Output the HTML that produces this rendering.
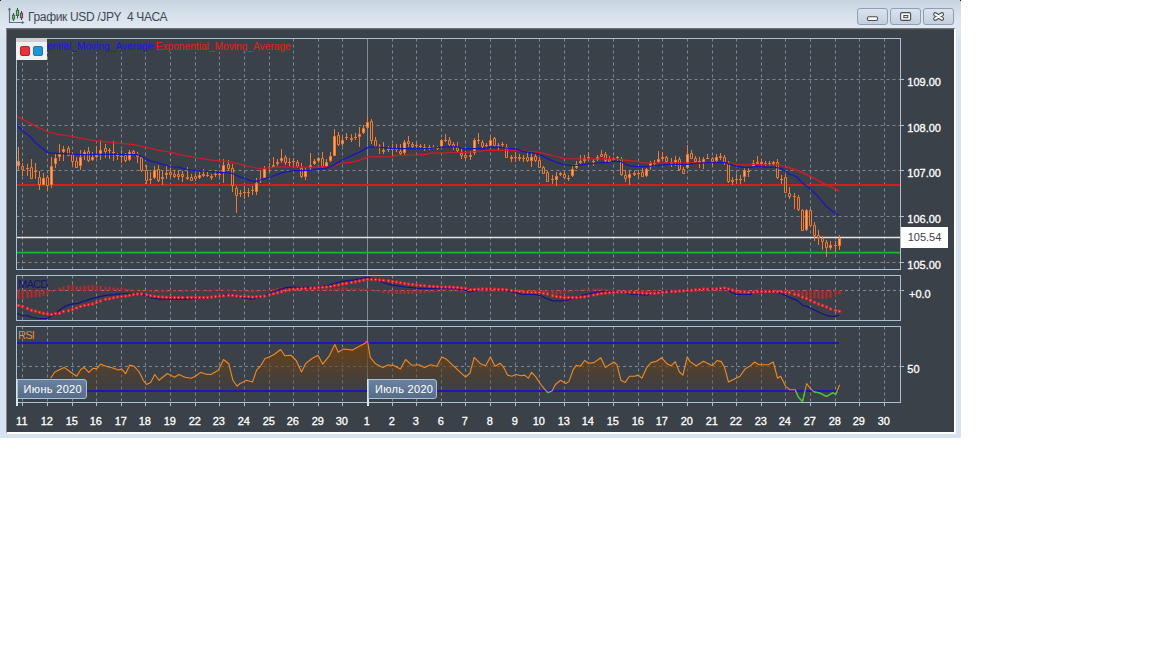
<!DOCTYPE html>
<html lang="ru"><head><meta charset="utf-8"><title>График USD /JPY 4 ЧАСА</title>
<style>
html,body{margin:0;padding:0;background:#fff;}
body{width:1152px;height:648px;position:relative;overflow:hidden;font-family:"Liberation Sans",sans-serif;}
#win{position:absolute;left:0;top:0;width:961px;height:438px;background:linear-gradient(#c7d3df 0px,#d8e1eb 14px,#e0e8f1 28px,#d6e3f0 40px,#d6e3f0 100%);overflow:hidden;}
#cl{position:absolute;left:6px;top:28px;width:950px;height:406px;background:#3b4149;border-top:1px solid #6c6f73;border-left:1px solid #85888c;border-right:2px solid #fff;border-bottom:2px solid #fff;box-sizing:border-box;box-shadow:inset 0 1px 0 #4a4f56;}
#title{position:absolute;left:28px;top:9.6px;font-size:12px;letter-spacing:-0.34px;line-height:15px;color:#3e4852;white-space:pre;}
.btn svg{position:absolute;left:-1px;top:-1px;}
.btn{position:absolute;top:8px;width:30.5px;height:16.5px;box-sizing:border-box;border:1px solid #8e9fb4;border-radius:3px;background:linear-gradient(#dbe3ee,#c3cfde);}
.xl{position:absolute;top:415.2px;-webkit-text-stroke:0.3px #fff;width:30px;text-align:center;font-size:11px;line-height:13px;color:#fff;}
.pl{position:absolute;left:907.3px;-webkit-text-stroke:0.3px #fff;font-size:11px;line-height:13px;color:#fff;}
#leg{position:absolute;left:16px;top:38px;width:31px;height:22px;background:linear-gradient(#cfcfcf 0,#cfcfcf 4px,#f1f1f1 4px);}
#leg i{position:absolute;top:8px;width:10px;height:10px;border-radius:2px;box-sizing:border-box;}
.ema{position:absolute;top:39px;height:13px;padding-top:1px;box-sizing:border-box;background:#3b4149;font-size:10.2px;line-height:13px;white-space:pre;}
.mon{position:absolute;top:379px;height:20px;box-sizing:border-box;border:1px solid #a9bfd6;border-radius:0 3px 3px 0;background:linear-gradient(#6a829f,#566d8a);color:#fff;font-size:11px;line-height:18px;padding:0 0 0 7px;}
.ind{position:absolute;font-size:11px;line-height:13px;}
#cur{position:absolute;left:901px;top:227px;width:47px;height:21px;background:#fff;color:#3b4149;font-size:11px;line-height:21px;text-align:center;}
</style></head><body>
<div id="win">
<div id="cl"></div><div style="position:absolute;left:0;top:0;width:1px;height:1px;background:#222"></div><div style="position:absolute;left:960px;top:0;width:1px;height:1px;background:#222"></div>
<svg width="961" height="438" viewBox="0 0 961 438" style="position:absolute;left:0;top:0">
<defs><linearGradient id="rsig" gradientUnits="userSpaceOnUse" x1="0" y1="341" x2="0" y2="398"><stop offset="0" stop-color="#70400a" stop-opacity="0.95"/><stop offset="0.45" stop-color="#62401a" stop-opacity="0.62"/><stop offset="1" stop-color="#4a3a28" stop-opacity="0"/></linearGradient>
<clipPath id="cm"><rect x="17" y="39" width="883" height="230"/></clipPath>
</defs>
<line x1="22.5" y1="38.5" x2="22.5" y2="269.5" stroke="#7d8a96" stroke-width="1" stroke-dasharray="3 3"/>
<line x1="47.5" y1="38.5" x2="47.5" y2="269.5" stroke="#7d8a96" stroke-width="1" stroke-dasharray="3 3"/>
<line x1="72.5" y1="38.5" x2="72.5" y2="269.5" stroke="#7d8a96" stroke-width="1" stroke-dasharray="3 3"/>
<line x1="96.5" y1="38.5" x2="96.5" y2="269.5" stroke="#7d8a96" stroke-width="1" stroke-dasharray="3 3"/>
<line x1="121.5" y1="38.5" x2="121.5" y2="269.5" stroke="#7d8a96" stroke-width="1" stroke-dasharray="3 3"/>
<line x1="145.5" y1="38.5" x2="145.5" y2="269.5" stroke="#7d8a96" stroke-width="1" stroke-dasharray="3 3"/>
<line x1="170.5" y1="38.5" x2="170.5" y2="269.5" stroke="#7d8a96" stroke-width="1" stroke-dasharray="3 3"/>
<line x1="195.5" y1="38.5" x2="195.5" y2="269.5" stroke="#7d8a96" stroke-width="1" stroke-dasharray="3 3"/>
<line x1="219.5" y1="38.5" x2="219.5" y2="269.5" stroke="#7d8a96" stroke-width="1" stroke-dasharray="3 3"/>
<line x1="244.5" y1="38.5" x2="244.5" y2="269.5" stroke="#7d8a96" stroke-width="1" stroke-dasharray="3 3"/>
<line x1="269.5" y1="38.5" x2="269.5" y2="269.5" stroke="#7d8a96" stroke-width="1" stroke-dasharray="3 3"/>
<line x1="293.5" y1="38.5" x2="293.5" y2="269.5" stroke="#7d8a96" stroke-width="1" stroke-dasharray="3 3"/>
<line x1="318.5" y1="38.5" x2="318.5" y2="269.5" stroke="#7d8a96" stroke-width="1" stroke-dasharray="3 3"/>
<line x1="342.5" y1="38.5" x2="342.5" y2="269.5" stroke="#7d8a96" stroke-width="1" stroke-dasharray="3 3"/>
<line x1="392.5" y1="38.5" x2="392.5" y2="269.5" stroke="#7d8a96" stroke-width="1" stroke-dasharray="3 3"/>
<line x1="416.5" y1="38.5" x2="416.5" y2="269.5" stroke="#7d8a96" stroke-width="1" stroke-dasharray="3 3"/>
<line x1="441.5" y1="38.5" x2="441.5" y2="269.5" stroke="#7d8a96" stroke-width="1" stroke-dasharray="3 3"/>
<line x1="465.5" y1="38.5" x2="465.5" y2="269.5" stroke="#7d8a96" stroke-width="1" stroke-dasharray="3 3"/>
<line x1="490.5" y1="38.5" x2="490.5" y2="269.5" stroke="#7d8a96" stroke-width="1" stroke-dasharray="3 3"/>
<line x1="515.5" y1="38.5" x2="515.5" y2="269.5" stroke="#7d8a96" stroke-width="1" stroke-dasharray="3 3"/>
<line x1="539.5" y1="38.5" x2="539.5" y2="269.5" stroke="#7d8a96" stroke-width="1" stroke-dasharray="3 3"/>
<line x1="564.5" y1="38.5" x2="564.5" y2="269.5" stroke="#7d8a96" stroke-width="1" stroke-dasharray="3 3"/>
<line x1="588.5" y1="38.5" x2="588.5" y2="269.5" stroke="#7d8a96" stroke-width="1" stroke-dasharray="3 3"/>
<line x1="613.5" y1="38.5" x2="613.5" y2="269.5" stroke="#7d8a96" stroke-width="1" stroke-dasharray="3 3"/>
<line x1="638.5" y1="38.5" x2="638.5" y2="269.5" stroke="#7d8a96" stroke-width="1" stroke-dasharray="3 3"/>
<line x1="662.5" y1="38.5" x2="662.5" y2="269.5" stroke="#7d8a96" stroke-width="1" stroke-dasharray="3 3"/>
<line x1="687.5" y1="38.5" x2="687.5" y2="269.5" stroke="#7d8a96" stroke-width="1" stroke-dasharray="3 3"/>
<line x1="712.5" y1="38.5" x2="712.5" y2="269.5" stroke="#7d8a96" stroke-width="1" stroke-dasharray="3 3"/>
<line x1="736.5" y1="38.5" x2="736.5" y2="269.5" stroke="#7d8a96" stroke-width="1" stroke-dasharray="3 3"/>
<line x1="761.5" y1="38.5" x2="761.5" y2="269.5" stroke="#7d8a96" stroke-width="1" stroke-dasharray="3 3"/>
<line x1="785.5" y1="38.5" x2="785.5" y2="269.5" stroke="#7d8a96" stroke-width="1" stroke-dasharray="3 3"/>
<line x1="810.5" y1="38.5" x2="810.5" y2="269.5" stroke="#7d8a96" stroke-width="1" stroke-dasharray="3 3"/>
<line x1="835.5" y1="38.5" x2="835.5" y2="269.5" stroke="#7d8a96" stroke-width="1" stroke-dasharray="3 3"/>
<line x1="859.5" y1="38.5" x2="859.5" y2="269.5" stroke="#7d8a96" stroke-width="1" stroke-dasharray="3 3"/>
<line x1="884.5" y1="38.5" x2="884.5" y2="269.5" stroke="#7d8a96" stroke-width="1" stroke-dasharray="3 3"/>
<line x1="22.5" y1="275.5" x2="22.5" y2="320.5" stroke="#7d8a96" stroke-width="1" stroke-dasharray="3 3"/>
<line x1="47.5" y1="275.5" x2="47.5" y2="320.5" stroke="#7d8a96" stroke-width="1" stroke-dasharray="3 3"/>
<line x1="72.5" y1="275.5" x2="72.5" y2="320.5" stroke="#7d8a96" stroke-width="1" stroke-dasharray="3 3"/>
<line x1="96.5" y1="275.5" x2="96.5" y2="320.5" stroke="#7d8a96" stroke-width="1" stroke-dasharray="3 3"/>
<line x1="121.5" y1="275.5" x2="121.5" y2="320.5" stroke="#7d8a96" stroke-width="1" stroke-dasharray="3 3"/>
<line x1="145.5" y1="275.5" x2="145.5" y2="320.5" stroke="#7d8a96" stroke-width="1" stroke-dasharray="3 3"/>
<line x1="170.5" y1="275.5" x2="170.5" y2="320.5" stroke="#7d8a96" stroke-width="1" stroke-dasharray="3 3"/>
<line x1="195.5" y1="275.5" x2="195.5" y2="320.5" stroke="#7d8a96" stroke-width="1" stroke-dasharray="3 3"/>
<line x1="219.5" y1="275.5" x2="219.5" y2="320.5" stroke="#7d8a96" stroke-width="1" stroke-dasharray="3 3"/>
<line x1="244.5" y1="275.5" x2="244.5" y2="320.5" stroke="#7d8a96" stroke-width="1" stroke-dasharray="3 3"/>
<line x1="269.5" y1="275.5" x2="269.5" y2="320.5" stroke="#7d8a96" stroke-width="1" stroke-dasharray="3 3"/>
<line x1="293.5" y1="275.5" x2="293.5" y2="320.5" stroke="#7d8a96" stroke-width="1" stroke-dasharray="3 3"/>
<line x1="318.5" y1="275.5" x2="318.5" y2="320.5" stroke="#7d8a96" stroke-width="1" stroke-dasharray="3 3"/>
<line x1="342.5" y1="275.5" x2="342.5" y2="320.5" stroke="#7d8a96" stroke-width="1" stroke-dasharray="3 3"/>
<line x1="392.5" y1="275.5" x2="392.5" y2="320.5" stroke="#7d8a96" stroke-width="1" stroke-dasharray="3 3"/>
<line x1="416.5" y1="275.5" x2="416.5" y2="320.5" stroke="#7d8a96" stroke-width="1" stroke-dasharray="3 3"/>
<line x1="441.5" y1="275.5" x2="441.5" y2="320.5" stroke="#7d8a96" stroke-width="1" stroke-dasharray="3 3"/>
<line x1="465.5" y1="275.5" x2="465.5" y2="320.5" stroke="#7d8a96" stroke-width="1" stroke-dasharray="3 3"/>
<line x1="490.5" y1="275.5" x2="490.5" y2="320.5" stroke="#7d8a96" stroke-width="1" stroke-dasharray="3 3"/>
<line x1="515.5" y1="275.5" x2="515.5" y2="320.5" stroke="#7d8a96" stroke-width="1" stroke-dasharray="3 3"/>
<line x1="539.5" y1="275.5" x2="539.5" y2="320.5" stroke="#7d8a96" stroke-width="1" stroke-dasharray="3 3"/>
<line x1="564.5" y1="275.5" x2="564.5" y2="320.5" stroke="#7d8a96" stroke-width="1" stroke-dasharray="3 3"/>
<line x1="588.5" y1="275.5" x2="588.5" y2="320.5" stroke="#7d8a96" stroke-width="1" stroke-dasharray="3 3"/>
<line x1="613.5" y1="275.5" x2="613.5" y2="320.5" stroke="#7d8a96" stroke-width="1" stroke-dasharray="3 3"/>
<line x1="638.5" y1="275.5" x2="638.5" y2="320.5" stroke="#7d8a96" stroke-width="1" stroke-dasharray="3 3"/>
<line x1="662.5" y1="275.5" x2="662.5" y2="320.5" stroke="#7d8a96" stroke-width="1" stroke-dasharray="3 3"/>
<line x1="687.5" y1="275.5" x2="687.5" y2="320.5" stroke="#7d8a96" stroke-width="1" stroke-dasharray="3 3"/>
<line x1="712.5" y1="275.5" x2="712.5" y2="320.5" stroke="#7d8a96" stroke-width="1" stroke-dasharray="3 3"/>
<line x1="736.5" y1="275.5" x2="736.5" y2="320.5" stroke="#7d8a96" stroke-width="1" stroke-dasharray="3 3"/>
<line x1="761.5" y1="275.5" x2="761.5" y2="320.5" stroke="#7d8a96" stroke-width="1" stroke-dasharray="3 3"/>
<line x1="785.5" y1="275.5" x2="785.5" y2="320.5" stroke="#7d8a96" stroke-width="1" stroke-dasharray="3 3"/>
<line x1="810.5" y1="275.5" x2="810.5" y2="320.5" stroke="#7d8a96" stroke-width="1" stroke-dasharray="3 3"/>
<line x1="835.5" y1="275.5" x2="835.5" y2="320.5" stroke="#7d8a96" stroke-width="1" stroke-dasharray="3 3"/>
<line x1="859.5" y1="275.5" x2="859.5" y2="320.5" stroke="#7d8a96" stroke-width="1" stroke-dasharray="3 3"/>
<line x1="884.5" y1="275.5" x2="884.5" y2="320.5" stroke="#7d8a96" stroke-width="1" stroke-dasharray="3 3"/>
<line x1="22.5" y1="326.5" x2="22.5" y2="402.5" stroke="#7d8a96" stroke-width="1" stroke-dasharray="3 3"/>
<line x1="47.5" y1="326.5" x2="47.5" y2="402.5" stroke="#7d8a96" stroke-width="1" stroke-dasharray="3 3"/>
<line x1="72.5" y1="326.5" x2="72.5" y2="402.5" stroke="#7d8a96" stroke-width="1" stroke-dasharray="3 3"/>
<line x1="96.5" y1="326.5" x2="96.5" y2="402.5" stroke="#7d8a96" stroke-width="1" stroke-dasharray="3 3"/>
<line x1="121.5" y1="326.5" x2="121.5" y2="402.5" stroke="#7d8a96" stroke-width="1" stroke-dasharray="3 3"/>
<line x1="145.5" y1="326.5" x2="145.5" y2="402.5" stroke="#7d8a96" stroke-width="1" stroke-dasharray="3 3"/>
<line x1="170.5" y1="326.5" x2="170.5" y2="402.5" stroke="#7d8a96" stroke-width="1" stroke-dasharray="3 3"/>
<line x1="195.5" y1="326.5" x2="195.5" y2="402.5" stroke="#7d8a96" stroke-width="1" stroke-dasharray="3 3"/>
<line x1="219.5" y1="326.5" x2="219.5" y2="402.5" stroke="#7d8a96" stroke-width="1" stroke-dasharray="3 3"/>
<line x1="244.5" y1="326.5" x2="244.5" y2="402.5" stroke="#7d8a96" stroke-width="1" stroke-dasharray="3 3"/>
<line x1="269.5" y1="326.5" x2="269.5" y2="402.5" stroke="#7d8a96" stroke-width="1" stroke-dasharray="3 3"/>
<line x1="293.5" y1="326.5" x2="293.5" y2="402.5" stroke="#7d8a96" stroke-width="1" stroke-dasharray="3 3"/>
<line x1="318.5" y1="326.5" x2="318.5" y2="402.5" stroke="#7d8a96" stroke-width="1" stroke-dasharray="3 3"/>
<line x1="342.5" y1="326.5" x2="342.5" y2="402.5" stroke="#7d8a96" stroke-width="1" stroke-dasharray="3 3"/>
<line x1="392.5" y1="326.5" x2="392.5" y2="402.5" stroke="#7d8a96" stroke-width="1" stroke-dasharray="3 3"/>
<line x1="416.5" y1="326.5" x2="416.5" y2="402.5" stroke="#7d8a96" stroke-width="1" stroke-dasharray="3 3"/>
<line x1="441.5" y1="326.5" x2="441.5" y2="402.5" stroke="#7d8a96" stroke-width="1" stroke-dasharray="3 3"/>
<line x1="465.5" y1="326.5" x2="465.5" y2="402.5" stroke="#7d8a96" stroke-width="1" stroke-dasharray="3 3"/>
<line x1="490.5" y1="326.5" x2="490.5" y2="402.5" stroke="#7d8a96" stroke-width="1" stroke-dasharray="3 3"/>
<line x1="515.5" y1="326.5" x2="515.5" y2="402.5" stroke="#7d8a96" stroke-width="1" stroke-dasharray="3 3"/>
<line x1="539.5" y1="326.5" x2="539.5" y2="402.5" stroke="#7d8a96" stroke-width="1" stroke-dasharray="3 3"/>
<line x1="564.5" y1="326.5" x2="564.5" y2="402.5" stroke="#7d8a96" stroke-width="1" stroke-dasharray="3 3"/>
<line x1="588.5" y1="326.5" x2="588.5" y2="402.5" stroke="#7d8a96" stroke-width="1" stroke-dasharray="3 3"/>
<line x1="613.5" y1="326.5" x2="613.5" y2="402.5" stroke="#7d8a96" stroke-width="1" stroke-dasharray="3 3"/>
<line x1="638.5" y1="326.5" x2="638.5" y2="402.5" stroke="#7d8a96" stroke-width="1" stroke-dasharray="3 3"/>
<line x1="662.5" y1="326.5" x2="662.5" y2="402.5" stroke="#7d8a96" stroke-width="1" stroke-dasharray="3 3"/>
<line x1="687.5" y1="326.5" x2="687.5" y2="402.5" stroke="#7d8a96" stroke-width="1" stroke-dasharray="3 3"/>
<line x1="712.5" y1="326.5" x2="712.5" y2="402.5" stroke="#7d8a96" stroke-width="1" stroke-dasharray="3 3"/>
<line x1="736.5" y1="326.5" x2="736.5" y2="402.5" stroke="#7d8a96" stroke-width="1" stroke-dasharray="3 3"/>
<line x1="761.5" y1="326.5" x2="761.5" y2="402.5" stroke="#7d8a96" stroke-width="1" stroke-dasharray="3 3"/>
<line x1="785.5" y1="326.5" x2="785.5" y2="402.5" stroke="#7d8a96" stroke-width="1" stroke-dasharray="3 3"/>
<line x1="810.5" y1="326.5" x2="810.5" y2="402.5" stroke="#7d8a96" stroke-width="1" stroke-dasharray="3 3"/>
<line x1="835.5" y1="326.5" x2="835.5" y2="402.5" stroke="#7d8a96" stroke-width="1" stroke-dasharray="3 3"/>
<line x1="859.5" y1="326.5" x2="859.5" y2="402.5" stroke="#7d8a96" stroke-width="1" stroke-dasharray="3 3"/>
<line x1="884.5" y1="326.5" x2="884.5" y2="402.5" stroke="#7d8a96" stroke-width="1" stroke-dasharray="3 3"/>
<line x1="16.5" y1="79.5" x2="903.5" y2="79.5" stroke="#7d8a96" stroke-width="1" stroke-dasharray="3 3"/>
<line x1="16.5" y1="125.5" x2="903.5" y2="125.5" stroke="#7d8a96" stroke-width="1" stroke-dasharray="3 3"/>
<line x1="16.5" y1="170.5" x2="903.5" y2="170.5" stroke="#7d8a96" stroke-width="1" stroke-dasharray="3 3"/>
<line x1="16.5" y1="216.5" x2="903.5" y2="216.5" stroke="#7d8a96" stroke-width="1" stroke-dasharray="3 3"/>
<line x1="16.5" y1="262.5" x2="903.5" y2="262.5" stroke="#7d8a96" stroke-width="1" stroke-dasharray="3 3"/>
<line x1="900.5" y1="79.5" x2="904.0" y2="79.5" stroke="#a9c0d8" stroke-width="1"/>
<line x1="900.5" y1="125.5" x2="904.0" y2="125.5" stroke="#a9c0d8" stroke-width="1"/>
<line x1="900.5" y1="170.5" x2="904.0" y2="170.5" stroke="#a9c0d8" stroke-width="1"/>
<line x1="900.5" y1="216.5" x2="904.0" y2="216.5" stroke="#a9c0d8" stroke-width="1"/>
<line x1="900.5" y1="262.5" x2="904.0" y2="262.5" stroke="#a9c0d8" stroke-width="1"/>
<line x1="900.5" y1="290.5" x2="904.0" y2="290.5" stroke="#a9c0d8" stroke-width="1"/>
<line x1="900.5" y1="366.5" x2="904.0" y2="366.5" stroke="#a9c0d8" stroke-width="1"/>
<line x1="367.5" y1="38.5" x2="367.5" y2="402.5" stroke="#7f8d9b" stroke-width="1"/>
<g clip-path="url(#cm)">
<line x1="17" y1="185" x2="900" y2="185" stroke="#cc1f28" stroke-width="2"/>
<line x1="17" y1="237.5" x2="900" y2="237.5" stroke="#e6e6e6" stroke-width="1.3"/>
<line x1="17" y1="252.7" x2="900" y2="252.7" stroke="#1fb82a" stroke-width="1.8"/>
<path d="M18.5 147V170M22.5 163V176M27.5 164V176M26 168.5H29M31.5 159V179M35.5 163V179M34 171.5H37M39.5 171V190M43.5 173V185M47.5 175V191M51.5 157V188M55.5 154V168M59.5 144V161M63.5 146V161M68.5 146V156M72.5 152V166M76.5 157V168M80.5 150V170M84.5 150V160M88.5 147V162M92.5 152V161M96.5 146V158M100.5 140V160M105.5 144V158M109.5 148V159M108 150.5H111M113.5 141V161M112 152.5H115M117.5 153V160M116 155.5H119M121.5 150V163M120 156.5H123M125.5 153V162M129.5 150V161M133.5 150V155M137.5 152V163M141.5 157V172M146.5 165V184M150.5 172V184M149 179.5H152M154.5 166V179M158.5 165V182M162.5 171V185M166.5 166V179M170.5 166V177M174.5 170V178M178.5 170V180M182.5 171V182M187.5 167V180M191.5 174V181M195.5 174V181M199.5 172V179M203.5 169V177M207.5 171V177M206 175.5H209M211.5 174V180M215.5 170V177M214 174.5H217M219.5 171V177M218 174.5H221M223.5 159V183M228.5 160V170M232.5 164V192M236.5 186V213M240.5 190V197M239 193.5H242M244.5 186V199M243 192.5H246M248.5 188V197M247 192.5H250M252.5 186V195M251 190.5H254M256.5 178V195M260.5 170V183M264.5 166V179M269.5 163V172M268 167.5H271M273.5 157V168M277.5 159V166M281.5 149V163M285.5 155V165M289.5 158V166M288 162.5H291M293.5 158V168M292 161.5H295M297.5 160V168M301.5 163V178M305.5 168V180M310.5 153V170M314.5 159V165M318.5 157V163M322.5 152V168M326.5 159V168M330.5 152V162M334.5 129V156M338.5 132V146M342.5 136V146M346.5 133V140M345 137.5H348M351.5 134V142M355.5 133V140M354 137.5H357M359.5 127V147M363.5 125V134M367.5 116V129M371.5 119V144M375.5 137V148M379.5 144V154M378 146.5H381M383.5 142V154M388.5 146V152M387 149.5H390M392.5 144V156M391 149.5H394M396.5 144V152M395 149.5H398M400.5 144V155M404.5 140V155M408.5 136V147M412.5 142V148M416.5 143V149M415 145.5H418M420.5 144V148M419 146.5H422M424.5 144V151M429.5 145V150M428 147.5H431M433.5 145V149M432 147.5H435M437.5 146V150M441.5 139V147M445.5 134V142M444 140.5H447M449.5 137V146M453.5 142V150M457.5 142V152M461.5 149V159M465.5 151V160M470.5 151V160M474.5 138V155M478.5 133V144M477 140.5H480M482.5 140V148M486.5 143V148M485 145.5H488M490.5 136V147M494.5 137V147M498.5 143V150M502.5 142V147M501 144.5H504M506.5 144V158M511.5 155V162M515.5 152V162M514 157.5H517M519.5 154V161M523.5 155V162M522 158.5H525M527.5 152V162M531.5 153V167M535.5 154V162M539.5 157V168M543.5 166V174M547.5 171V182M552.5 175V184M551 179.5H554M556.5 172V186M560.5 172V176M564.5 172V179M568.5 175V181M567 178.5H570M572.5 166V177M576.5 161V169M580.5 155V164M584.5 155V163M588.5 152V161M593.5 159V166M592 161.5H595M597.5 155V161M601.5 150V157M605.5 152V162M609.5 156V163M613.5 157V161M617.5 156V161M616 157.5H619M621.5 157V176M625.5 170V182M629.5 170V185M634.5 171V176M638.5 170V178M637 173.5H640M642.5 168V177M646.5 168V177M650.5 161V170M654.5 160V167M653 163.5H656M658.5 151V163M662.5 152V161M666.5 156V163M671.5 158V167M675.5 156V166M679.5 157V171M683.5 167V174M687.5 145V169M691.5 150V159M695.5 156V163M699.5 157V168M698 161.5H701M703.5 157V169M707.5 154V159M706 158.5H709M712.5 157V166M716.5 154V163M720.5 153V160M724.5 155V165M728.5 161V183M732.5 177V185M736.5 174V184M735 179.5H738M740.5 175V184M739 179.5H742M744.5 168V182M748.5 167V177M747 171.5H750M753.5 160V167M757.5 156V165M761.5 159V166M765.5 161V166M769.5 161V166M773.5 161V166M777.5 159V179M781.5 175V184M780 179.5H783M785.5 174V193M789.5 187V199M794.5 193V209M793 196.5H796M798.5 195V211M802.5 209V231M806.5 209V231M810.5 209V226M814.5 222V241M818.5 230V245M822.5 236V250M826.5 240V257M830.5 241V250M835.5 241V252M834 245.5H837M839.5 235V250" stroke="#ee7a34" stroke-width="1" fill="none"/>
<path d="M21.5 166.5h2v3h-2zM30.5 167.5h2v11h-2zM38.5 177.5h2v7h-2zM46.5 177.5h2v8h-2zM67.5 148.5h2v7h-2zM71.5 154.5h2v7h-2zM75.5 161.5h2v6h-2zM87.5 151.5h2v9h-2zM104.5 148.5h2v3h-2zM124.5 155.5h2v5h-2zM132.5 151.5h2v2h-2zM136.5 154.5h2v2h-2zM140.5 157.5h2v13h-2zM145.5 170.5h2v10h-2zM157.5 169.5h2v11h-2zM169.5 172.5h2v2h-2zM173.5 174.5h2v2h-2zM177.5 174.5h2v2h-2zM181.5 174.5h2v2h-2zM190.5 177.5h2v3h-2zM194.5 176.5h2v2h-2zM227.5 164.5h2v4h-2zM231.5 168.5h2v17h-2zM235.5 188.5h2v7h-2zM284.5 157.5h2v5h-2zM296.5 162.5h2v4h-2zM300.5 168.5h2v8h-2zM321.5 158.5h2v8h-2zM337.5 135.5h2v9h-2zM370.5 121.5h2v19h-2zM374.5 140.5h2v6h-2zM399.5 151.5h2v2h-2zM407.5 141.5h2v2h-2zM411.5 144.5h2v2h-2zM448.5 140.5h2v4h-2zM452.5 144.5h2v2h-2zM456.5 147.5h2v3h-2zM460.5 153.5h2v2h-2zM464.5 155.5h2v2h-2zM481.5 142.5h2v4h-2zM493.5 138.5h2v7h-2zM505.5 147.5h2v10h-2zM526.5 157.5h2v3h-2zM534.5 156.5h2v4h-2zM538.5 160.5h2v7h-2zM542.5 167.5h2v6h-2zM546.5 172.5h2v9h-2zM563.5 174.5h2v3h-2zM600.5 154.5h2v2h-2zM604.5 154.5h2v6h-2zM608.5 159.5h2v2h-2zM620.5 159.5h2v15h-2zM624.5 175.5h2v3h-2zM641.5 172.5h2v4h-2zM665.5 157.5h2v4h-2zM678.5 159.5h2v10h-2zM682.5 169.5h2v4h-2zM690.5 153.5h2v5h-2zM694.5 158.5h2v3h-2zM711.5 158.5h2v3h-2zM723.5 157.5h2v5h-2zM727.5 163.5h2v18h-2zM776.5 162.5h2v15h-2zM784.5 177.5h2v15h-2zM788.5 193.5h2v3h-2zM797.5 197.5h2v12h-2zM801.5 210.5h2v20h-2zM809.5 210.5h2v15h-2zM813.5 225.5h2v10h-2zM817.5 235.5h2v2h-2zM821.5 238.5h2v3h-2zM825.5 242.5h2v5h-2z" stroke="#ee7a34" stroke-width="1" fill="#3b4149"/>
<path d="M17.5 161.5h2v4h-2zM42.5 178.5h2v6h-2zM50.5 166.5h2v18h-2zM54.5 158.5h2v5h-2zM58.5 154.5h2v2h-2zM62.5 149.5h2v2h-2zM79.5 157.5h2v8h-2zM83.5 152.5h2v2h-2zM91.5 157.5h2v2h-2zM95.5 155.5h2v1h-2zM99.5 150.5h2v4h-2zM128.5 152.5h2v7h-2zM153.5 170.5h2v7h-2zM161.5 177.5h2v1h-2zM165.5 173.5h2v1h-2zM186.5 177.5h2v1h-2zM198.5 175.5h2v2h-2zM202.5 174.5h2v1h-2zM210.5 176.5h2v1h-2zM222.5 165.5h2v6h-2zM255.5 183.5h2v8h-2zM259.5 179.5h2v1h-2zM263.5 169.5h2v8h-2zM272.5 165.5h2v1h-2zM276.5 162.5h2v1h-2zM280.5 158.5h2v2h-2zM304.5 170.5h2v6h-2zM309.5 165.5h2v2h-2zM313.5 161.5h2v2h-2zM317.5 158.5h2v2h-2zM325.5 162.5h2v4h-2zM329.5 156.5h2v4h-2zM333.5 136.5h2v19h-2zM341.5 140.5h2v3h-2zM350.5 138.5h2v1h-2zM358.5 134.5h2v2h-2zM362.5 128.5h2v4h-2zM366.5 122.5h2v5h-2zM382.5 150.5h2v1h-2zM403.5 142.5h2v10h-2zM423.5 147.5h2v1h-2zM436.5 147.5h2v1h-2zM440.5 140.5h2v6h-2zM469.5 155.5h2v1h-2zM473.5 140.5h2v12h-2zM489.5 140.5h2v5h-2zM497.5 145.5h2v0h-2zM510.5 157.5h2v1h-2zM518.5 157.5h2v1h-2zM530.5 157.5h2v3h-2zM555.5 176.5h2v3h-2zM559.5 173.5h2v1h-2zM571.5 169.5h2v6h-2zM575.5 164.5h2v3h-2zM579.5 161.5h2v1h-2zM583.5 158.5h2v2h-2zM587.5 157.5h2v1h-2zM596.5 157.5h2v2h-2zM612.5 158.5h2v1h-2zM628.5 174.5h2v3h-2zM633.5 173.5h2v1h-2zM645.5 169.5h2v6h-2zM649.5 163.5h2v3h-2zM657.5 159.5h2v2h-2zM661.5 157.5h2v1h-2zM670.5 162.5h2v2h-2zM674.5 160.5h2v2h-2zM686.5 154.5h2v13h-2zM702.5 159.5h2v2h-2zM715.5 157.5h2v3h-2zM719.5 156.5h2v1h-2zM731.5 180.5h2v1h-2zM743.5 170.5h2v6h-2zM752.5 163.5h2v3h-2zM756.5 162.5h2v1h-2zM760.5 162.5h2v1h-2zM764.5 163.5h2v0h-2zM768.5 163.5h2v0h-2zM772.5 162.5h2v1h-2zM805.5 210.5h2v19h-2zM829.5 245.5h2v2h-2zM838.5 238.5h2v7h-2z" stroke="#ee7a34" stroke-width="1" fill="#ffa45c"/>
<path d="M16.0 116.2 L22.5 119.0 L31.3 123.9 L39.6 128.1 L47.2 131.5 L57.7 134.3 L72.2 136.4 L85.4 139.2 L96.3 140.8 L113.2 142.6 L121.3 143.3 L134.1 144.7 L145.4 147.2 L158.4 150.3 L170.0 152.2 L178.3 154.3 L187.4 156.1 L195.4 157.5 L203.3 158.9 L211.7 160.1 L219.6 160.8 L228.3 161.7 L236.7 163.3 L244.6 165.4 L253.3 167.5 L258.9 168.5 L267.2 168.2 L275.6 167.2 L285.3 166.8 L295.0 166.9 L303.3 167.2 L314.4 167.2 L322.8 166.7 L330.5 166.9 L334.6 165.3 L342.5 163.2 L351.8 162.2 L359.4 160.4 L367.3 156.9 L379.6 156.9 L392.3 156.7 L396.2 155.3 L416.4 154.9 L426.8 154.4 L429.6 153.1 L441.4 152.8 L457.5 152.5 L465.4 152.5 L474.3 151.7 L480.9 150.8 L486.3 150.6 L490.5 150.3 L506.5 150.3 L515.5 150.6 L527.3 151.4 L539.5 152.4 L547.4 154.4 L556.6 156.5 L564.4 158.6 L575.2 158.9 L588.6 158.9 L601.3 158.9 L613.4 158.9 L621.5 159.7 L629.4 160.7 L638.5 161.4 L641.7 162.8 L658.4 162.8 L671.3 162.8 L687.6 162.8 L703.5 162.5 L724.5 162.5 L733.4 163.5 L736.4 164.9 L748.7 164.9 L753.5 164.4 L757.0 164.4 L768.3 165.0 L777.4 165.0 L785.4 166.1 L796.8 169.9 L806.5 174.0 L818.3 180.3 L826.7 184.7 L835.4 188.6 L839.2 190.7" stroke="#d01c26" stroke-width="1.25" fill="none" stroke-linejoin="round"/>
<path d="M786.0 167.4 L797.4 171.2 L807.1 175.3 L818.9 181.6 L827.3 186.0 L836.0 189.9 L839.8 192.0" stroke="#d8242c" stroke-width="1" fill="none" stroke-dasharray="2 1.5"/>
<path d="M16.0 123.9 L22.5 130.8 L27.1 134.3 L31.3 137.8 L35.4 142.6 L39.6 146.1 L43.8 149.6 L47.4 152.4 L51.4 153.3 L57.7 153.3 L72.2 154.2 L85.4 154.7 L99.3 154.4 L113.2 154.4 L127.1 154.7 L137.7 154.7 L141.7 156.5 L145.4 158.9 L150.3 161.1 L158.4 162.8 L166.4 165.3 L170.0 166.8 L178.3 167.2 L187.4 169.6 L195.4 170.7 L203.3 171.0 L211.7 171.7 L219.6 172.4 L228.3 172.8 L232.5 173.3 L236.7 175.6 L244.6 178.3 L250.6 180.7 L254.7 181.4 L258.9 180.7 L264.7 178.6 L269.3 177.5 L275.6 175.1 L281.1 173.1 L288.1 171.4 L295.0 170.7 L303.3 170.7 L310.6 170.3 L318.5 168.9 L324.0 168.8 L330.5 166.7 L334.6 164.6 L342.5 159.7 L351.8 155.6 L359.4 152.1 L367.3 147.9 L369.8 146.9 L379.6 147.2 L392.3 148.6 L404.3 148.6 L416.4 148.6 L429.6 148.3 L441.4 147.2 L449.4 146.9 L457.5 146.9 L461.5 148.3 L465.4 148.9 L474.3 148.6 L480.9 148.5 L483.6 148.6 L486.3 148.2 L490.5 146.8 L498.8 147.2 L506.5 148.2 L515.5 148.9 L522.4 151.4 L531.5 152.8 L539.5 154.2 L547.4 158.6 L556.6 162.5 L564.4 164.9 L572.6 165.6 L576.6 165.3 L584.5 164.4 L593.3 163.5 L601.3 162.5 L609.4 162.5 L613.4 161.1 L621.5 161.7 L625.5 164.4 L630.8 165.8 L636.2 166.7 L645.9 166.7 L650.5 166.2 L658.4 165.6 L666.4 164.4 L679.5 164.4 L687.6 164.4 L695.5 163.5 L703.5 162.8 L712.3 162.5 L720.5 162.5 L724.5 162.5 L728.5 163.9 L736.4 166.2 L744.5 167.6 L750.1 167.6 L753.5 166.7 L757.0 166.4 L765.6 167.1 L773.9 167.1 L781.4 168.5 L785.4 171.2 L789.4 174.0 L796.8 176.8 L802.5 183.1 L810.6 189.3 L818.3 196.9 L826.7 206.7 L835.4 213.6 L839.2 215.3" stroke="#1616c4" stroke-width="1.25" fill="none" stroke-linejoin="round"/>
</g>
<line x1="17" y1="290.5" x2="904" y2="290.5" stroke="#7d8a96" stroke-width="1" stroke-dasharray="3 3"/>
<path d="M18.5 290.0V299.1M22.5 290.0V299.6M27.5 290.0V298.0M31.5 290.0V297.5M35.5 290.0V297.2M39.5 290.0V296.7M43.5 290.0V295.8M47.5 290.0V294.7M51.5 290.0V292.0M55.5 291.0V289.5M59.5 291.0V287.4M63.5 291.0V286.6M68.5 291.0V284.9M72.5 291.0V285.1M76.5 291.0V286.2M80.5 291.0V286.4M84.5 291.0V285.8M88.5 291.0V285.4M92.5 291.0V285.1M96.5 291.0V285.4M100.5 291.0V286.1M105.5 291.0V286.7M109.5 291.0V286.7M113.5 291.0V287.5M117.5 291.0V287.7M121.5 291.0V287.8M125.5 291.0V288.3M129.5 291.0V288.9M133.5 291.0V289.5M137.5 291.0V289.5M141.5 290.0V291.5M146.5 290.0V291.5M150.5 290.0V292.3M154.5 290.0V292.6M158.5 290.0V292.6M162.5 290.0V292.5M166.5 290.0V292.3M170.5 290.0V292.2M174.5 290.0V292.1M178.5 290.0V292.0M182.5 290.0V292.0M187.5 290.0V291.8M191.5 290.0V291.7M195.5 290.0V291.5M199.5 290.0V291.5M203.5 290.0V291.5M207.5 290.0V291.5M211.5 290.0V291.5M215.5 291.0V289.5M219.5 291.0V289.5M223.5 291.0V289.5M228.5 291.0V289.5M232.5 291.0V289.5M236.5 290.0V291.5M240.5 290.0V291.5M244.5 290.0V292.0M248.5 290.0V292.3M252.5 290.0V292.6M256.5 290.0V291.8M260.5 290.0V291.5M264.5 291.0V289.5M269.5 291.0V289.4M273.5 291.0V288.7M277.5 291.0V288.0M281.5 291.0V287.7M285.5 291.0V287.4M289.5 291.0V287.8M293.5 291.0V288.2M297.5 291.0V288.8M301.5 291.0V289.3M305.5 291.0V289.5M310.5 291.0V289.5M314.5 291.0V289.5M318.5 291.0V289.5M322.5 291.0V289.5M326.5 291.0V289.1M330.5 291.0V288.8M334.5 291.0V288.4M338.5 291.0V288.1M342.5 291.0V287.8M346.5 291.0V288.0M351.5 291.0V288.3M355.5 291.0V288.4M359.5 291.0V288.4M363.5 291.0V288.4M367.5 291.0V288.4M371.5 291.0V289.5M375.5 290.0V291.5M379.5 290.0V291.7M383.5 290.0V292.9M388.5 290.0V293.8M392.5 290.0V294.0M396.5 290.0V294.0M400.5 290.0V294.0M404.5 290.0V294.0M408.5 290.0V294.0M412.5 290.0V293.9M416.5 290.0V293.8M420.5 290.0V293.5M424.5 290.0V293.2M429.5 290.0V292.8M433.5 290.0V292.4M437.5 290.0V292.1M441.5 290.0V291.7M445.5 290.0V291.7M449.5 290.0V291.6M453.5 290.0V291.6M457.5 290.0V291.8M461.5 290.0V292.2M465.5 290.0V292.6M470.5 290.0V292.5M474.5 290.0V292.0M478.5 290.0V291.5M482.5 290.0V291.5M486.5 290.0V291.5M490.5 290.0V291.5M494.5 290.0V291.5M498.5 290.0V291.5M502.5 290.0V291.5M506.5 290.0V291.5M511.5 290.0V291.8M515.5 290.0V292.2M519.5 290.0V293.0M523.5 290.0V293.3M527.5 290.0V292.9M531.5 290.0V292.7M535.5 290.0V292.8M539.5 290.0V293.4M543.5 290.0V294.4M547.5 290.0V295.3M552.5 290.0V295.3M556.5 290.0V294.9M560.5 290.0V294.3M564.5 290.0V293.8M568.5 290.0V292.6M572.5 290.0V291.5M576.5 291.0V289.5M580.5 291.0V289.3M584.5 291.0V288.7M588.5 291.0V288.4M593.5 291.0V288.4M597.5 291.0V288.4M601.5 291.0V288.6M605.5 291.0V288.9M609.5 291.0V289.2M613.5 291.0V289.5M617.5 291.0V289.5M621.5 290.0V291.5M625.5 290.0V291.5M629.5 290.0V292.1M634.5 290.0V292.5M638.5 290.0V292.3M642.5 290.0V292.3M646.5 290.0V292.2M650.5 290.0V291.5M654.5 291.0V289.5M658.5 291.0V289.5M662.5 291.0V289.5M666.5 291.0V289.5M671.5 291.0V289.5M675.5 291.0V289.5M679.5 291.0V289.5M683.5 291.0V289.5M687.5 291.0V289.5M691.5 290.0V291.5M695.5 290.0V291.5M699.5 290.0V291.5M703.5 290.0V291.5M707.5 290.0V291.5M712.5 290.0V291.5M716.5 290.0V291.5M720.5 290.0V291.5M724.5 290.0V291.5M728.5 290.0V292.2M732.5 290.0V293.4M736.5 290.0V294.1M740.5 290.0V293.2M744.5 290.0V293.0M748.5 290.0V292.8M753.5 290.0V291.5M757.5 291.0V289.5M761.5 291.0V289.5M765.5 291.0V289.5M769.5 291.0V289.5M773.5 291.0V289.5M777.5 290.0V291.5M781.5 290.0V292.1M785.5 290.0V293.6M789.5 290.0V295.5M794.5 290.0V295.7M798.5 290.0V296.9M802.5 290.0V298.8M806.5 290.0V298.5M810.5 290.0V298.4M814.5 290.0V298.3M818.5 290.0V298.5M822.5 290.0V299.1M826.5 290.0V298.8M830.5 290.0V298.0M835.5 290.0V296.2M839.5 290.0V294.4" stroke="#c8262c" stroke-width="2" fill="none"/>
<path d="M16.2 313.3 L22.7 315.5 L27.9 315.9 L31.4 317.2 L38.3 318.5 L47.0 318.5 L50.5 316.8 L57.4 312.0 L60.9 309.0 L66.1 305.9 L71.3 304.2 L78.2 303.3 L83.4 301.2 L92.1 298.6 L100.8 296.4 L107.8 295.1 L114.0 294.7 L121.5 293.9 L130.8 293.5 L139.2 293.9 L145.8 295.3 L151.7 298.0 L160.0 299.1 L170.4 299.1 L182.9 299.1 L195.0 298.7 L207.9 298.0 L219.4 295.3 L228.8 294.5 L237.1 296.6 L240.0 297.0 L244.4 298.0 L252.5 299.1 L260.8 297.0 L269.2 293.9 L277.5 290.3 L285.8 287.6 L293.5 287.0 L302.5 287.6 L318.5 287.0 L329.6 284.9 L342.7 281.4 L354.6 279.9 L367.5 277.2 L377.5 280.3 L385.8 283.5 L392.1 284.9 L404.6 287.0 L416.7 288.2 L427.5 288.7 L441.0 288.2 L454.6 288.2 L465.6 290.3 L469.2 292.0 L470.0 291.8 L480.4 289.7 L490.8 289.1 L505.4 290.3 L515.2 292.4 L522.1 294.5 L534.6 294.5 L539.8 295.3 L547.1 298.7 L553.3 300.8 L564.4 300.8 L574.2 298.0 L582.5 295.3 L588.8 293.9 L599.2 291.8 L613.3 291.2 L624.2 292.4 L632.5 294.5 L647.1 294.9 L655.4 292.8 L662.7 291.2 L678.3 290.8 L687.3 289.7 L690.0 290.3 L702.5 289.1 L715.0 289.1 L725.4 288.7 L731.7 292.4 L736.5 294.5 L750.4 294.5 L754.6 292.4 L761.5 290.8 L773.3 290.8 L777.8 292.1 L781.3 293.4 L785.6 295.5 L790.8 298.1 L796.0 299.9 L798.6 301.6 L802.6 305.3 L806.5 306.4 L810.8 308.3 L815.1 310.3 L818.6 312.0 L822.1 313.8 L825.6 315.1 L829.9 316.4 L835.1 316.4 L839.0 315.2" stroke="#12128c" stroke-width="1.2" fill="none"/>
<g fill="#e8242e"><circle cx="18.5" cy="305.5" r="1.75"/><circle cx="22.5" cy="306.3" r="1.75"/><circle cx="27.5" cy="308.4" r="1.75"/><circle cx="31.5" cy="310.2" r="1.75"/><circle cx="35.5" cy="311.3" r="1.75"/><circle cx="39.5" cy="312.3" r="1.75"/><circle cx="43.5" cy="313.2" r="1.75"/><circle cx="47.5" cy="314.1" r="1.75"/><circle cx="51.5" cy="314.6" r="1.75"/><circle cx="55.5" cy="313.4" r="1.75"/><circle cx="59.5" cy="313.3" r="1.75"/><circle cx="63.5" cy="311.4" r="1.75"/><circle cx="68.5" cy="310.7" r="1.75"/><circle cx="72.5" cy="309.5" r="1.75"/><circle cx="76.5" cy="307.9" r="1.75"/><circle cx="80.5" cy="306.5" r="1.75"/><circle cx="84.5" cy="305.6" r="1.75"/><circle cx="88.5" cy="304.8" r="1.75"/><circle cx="92.5" cy="303.9" r="1.75"/><circle cx="96.5" cy="302.6" r="1.75"/><circle cx="100.5" cy="300.9" r="1.75"/><circle cx="105.5" cy="299.3" r="1.75"/><circle cx="109.5" cy="298.7" r="1.75"/><circle cx="113.5" cy="297.7" r="1.75"/><circle cx="117.5" cy="297.1" r="1.75"/><circle cx="121.5" cy="296.6" r="1.75"/><circle cx="125.5" cy="295.9" r="1.75"/><circle cx="129.5" cy="295.2" r="1.75"/><circle cx="133.5" cy="294.6" r="1.75"/><circle cx="137.5" cy="294.1" r="1.75"/><circle cx="141.5" cy="294.1" r="1.75"/><circle cx="146.5" cy="294.7" r="1.75"/><circle cx="150.5" cy="295.7" r="1.75"/><circle cx="154.5" cy="296.3" r="1.75"/><circle cx="158.5" cy="296.8" r="1.75"/><circle cx="162.5" cy="297.1" r="1.75"/><circle cx="166.5" cy="297.3" r="1.75"/><circle cx="170.5" cy="297.4" r="1.75"/><circle cx="174.5" cy="297.5" r="1.75"/><circle cx="178.5" cy="297.6" r="1.75"/><circle cx="182.5" cy="297.6" r="1.75"/><circle cx="187.5" cy="297.6" r="1.75"/><circle cx="191.5" cy="297.6" r="1.75"/><circle cx="195.5" cy="297.6" r="1.75"/><circle cx="199.5" cy="297.6" r="1.75"/><circle cx="203.5" cy="297.5" r="1.75"/><circle cx="207.5" cy="297.4" r="1.75"/><circle cx="211.5" cy="297.0" r="1.75"/><circle cx="215.5" cy="296.5" r="1.75"/><circle cx="219.5" cy="295.9" r="1.75"/><circle cx="223.5" cy="295.7" r="1.75"/><circle cx="228.5" cy="295.3" r="1.75"/><circle cx="232.5" cy="295.6" r="1.75"/><circle cx="236.5" cy="295.9" r="1.75"/><circle cx="240.5" cy="296.6" r="1.75"/><circle cx="244.5" cy="296.6" r="1.75"/><circle cx="248.5" cy="296.8" r="1.75"/><circle cx="252.5" cy="297.0" r="1.75"/><circle cx="256.5" cy="296.8" r="1.75"/><circle cx="260.5" cy="296.6" r="1.75"/><circle cx="264.5" cy="295.9" r="1.75"/><circle cx="269.5" cy="294.8" r="1.75"/><circle cx="273.5" cy="293.8" r="1.75"/><circle cx="277.5" cy="292.8" r="1.75"/><circle cx="281.5" cy="291.8" r="1.75"/><circle cx="285.5" cy="290.8" r="1.75"/><circle cx="289.5" cy="290.1" r="1.75"/><circle cx="293.5" cy="289.3" r="1.75"/><circle cx="297.5" cy="289.0" r="1.75"/><circle cx="301.5" cy="288.7" r="1.75"/><circle cx="305.5" cy="288.5" r="1.75"/><circle cx="310.5" cy="288.1" r="1.75"/><circle cx="314.5" cy="287.9" r="1.75"/><circle cx="318.5" cy="287.6" r="1.75"/><circle cx="322.5" cy="287.3" r="1.75"/><circle cx="326.5" cy="286.9" r="1.75"/><circle cx="330.5" cy="286.4" r="1.75"/><circle cx="334.5" cy="285.6" r="1.75"/><circle cx="338.5" cy="284.9" r="1.75"/><circle cx="342.5" cy="284.1" r="1.75"/><circle cx="346.5" cy="283.4" r="1.75"/><circle cx="351.5" cy="282.5" r="1.75"/><circle cx="355.5" cy="281.8" r="1.75"/><circle cx="359.5" cy="281.0" r="1.75"/><circle cx="363.5" cy="280.1" r="1.75"/><circle cx="367.5" cy="279.3" r="1.75"/><circle cx="371.5" cy="279.5" r="1.75"/><circle cx="375.5" cy="279.6" r="1.75"/><circle cx="379.5" cy="279.9" r="1.75"/><circle cx="383.5" cy="280.2" r="1.75"/><circle cx="388.5" cy="280.8" r="1.75"/><circle cx="392.5" cy="281.4" r="1.75"/><circle cx="396.5" cy="282.1" r="1.75"/><circle cx="400.5" cy="282.8" r="1.75"/><circle cx="404.5" cy="283.4" r="1.75"/><circle cx="408.5" cy="283.9" r="1.75"/><circle cx="412.5" cy="284.4" r="1.75"/><circle cx="416.5" cy="284.9" r="1.75"/><circle cx="420.5" cy="285.4" r="1.75"/><circle cx="424.5" cy="285.8" r="1.75"/><circle cx="429.5" cy="286.3" r="1.75"/><circle cx="433.5" cy="286.5" r="1.75"/><circle cx="437.5" cy="286.8" r="1.75"/><circle cx="441.5" cy="287.0" r="1.75"/><circle cx="445.5" cy="287.1" r="1.75"/><circle cx="449.5" cy="287.1" r="1.75"/><circle cx="453.5" cy="287.2" r="1.75"/><circle cx="457.5" cy="287.5" r="1.75"/><circle cx="461.5" cy="287.9" r="1.75"/><circle cx="465.5" cy="288.2" r="1.75"/><circle cx="470.5" cy="289.7" r="1.75"/><circle cx="474.5" cy="289.4" r="1.75"/><circle cx="478.5" cy="289.2" r="1.75"/><circle cx="482.5" cy="289.1" r="1.75"/><circle cx="486.5" cy="289.1" r="1.75"/><circle cx="490.5" cy="289.1" r="1.75"/><circle cx="494.5" cy="289.2" r="1.75"/><circle cx="498.5" cy="289.4" r="1.75"/><circle cx="502.5" cy="289.6" r="1.75"/><circle cx="506.5" cy="289.8" r="1.75"/><circle cx="511.5" cy="290.4" r="1.75"/><circle cx="515.5" cy="290.8" r="1.75"/><circle cx="519.5" cy="291.2" r="1.75"/><circle cx="523.5" cy="291.7" r="1.75"/><circle cx="527.5" cy="292.1" r="1.75"/><circle cx="531.5" cy="292.3" r="1.75"/><circle cx="535.5" cy="292.3" r="1.75"/><circle cx="539.5" cy="292.4" r="1.75"/><circle cx="543.5" cy="293.2" r="1.75"/><circle cx="547.5" cy="294.0" r="1.75"/><circle cx="552.5" cy="295.7" r="1.75"/><circle cx="556.5" cy="296.4" r="1.75"/><circle cx="560.5" cy="296.9" r="1.75"/><circle cx="564.5" cy="297.4" r="1.75"/><circle cx="568.5" cy="297.5" r="1.75"/><circle cx="572.5" cy="297.6" r="1.75"/><circle cx="576.5" cy="297.4" r="1.75"/><circle cx="580.5" cy="297.1" r="1.75"/><circle cx="584.5" cy="296.7" r="1.75"/><circle cx="588.5" cy="296.0" r="1.75"/><circle cx="593.5" cy="295.0" r="1.75"/><circle cx="597.5" cy="294.2" r="1.75"/><circle cx="601.5" cy="293.6" r="1.75"/><circle cx="605.5" cy="293.1" r="1.75"/><circle cx="609.5" cy="292.7" r="1.75"/><circle cx="613.5" cy="292.2" r="1.75"/><circle cx="617.5" cy="292.0" r="1.75"/><circle cx="621.5" cy="291.9" r="1.75"/><circle cx="625.5" cy="291.9" r="1.75"/><circle cx="629.5" cy="292.2" r="1.75"/><circle cx="634.5" cy="292.6" r="1.75"/><circle cx="638.5" cy="292.8" r="1.75"/><circle cx="642.5" cy="293.0" r="1.75"/><circle cx="646.5" cy="293.2" r="1.75"/><circle cx="650.5" cy="293.2" r="1.75"/><circle cx="654.5" cy="293.2" r="1.75"/><circle cx="658.5" cy="292.8" r="1.75"/><circle cx="662.5" cy="292.2" r="1.75"/><circle cx="666.5" cy="292.0" r="1.75"/><circle cx="671.5" cy="291.6" r="1.75"/><circle cx="675.5" cy="291.4" r="1.75"/><circle cx="679.5" cy="291.1" r="1.75"/><circle cx="683.5" cy="290.7" r="1.75"/><circle cx="687.5" cy="290.3" r="1.75"/><circle cx="691.5" cy="290.2" r="1.75"/><circle cx="695.5" cy="289.8" r="1.75"/><circle cx="699.5" cy="289.4" r="1.75"/><circle cx="703.5" cy="289.1" r="1.75"/><circle cx="707.5" cy="289.1" r="1.75"/><circle cx="712.5" cy="289.1" r="1.75"/><circle cx="716.5" cy="288.9" r="1.75"/><circle cx="720.5" cy="288.5" r="1.75"/><circle cx="724.5" cy="288.1" r="1.75"/><circle cx="728.5" cy="288.9" r="1.75"/><circle cx="732.5" cy="289.9" r="1.75"/><circle cx="736.5" cy="290.9" r="1.75"/><circle cx="740.5" cy="291.8" r="1.75"/><circle cx="744.5" cy="292.0" r="1.75"/><circle cx="748.5" cy="292.2" r="1.75"/><circle cx="753.5" cy="292.3" r="1.75"/><circle cx="757.5" cy="291.8" r="1.75"/><circle cx="761.5" cy="291.4" r="1.75"/><circle cx="765.5" cy="291.4" r="1.75"/><circle cx="769.5" cy="291.4" r="1.75"/><circle cx="773.5" cy="291.5" r="1.75"/><circle cx="777.5" cy="291.5" r="1.75"/><circle cx="781.5" cy="291.8" r="1.75"/><circle cx="785.5" cy="292.3" r="1.75"/><circle cx="789.5" cy="292.5" r="1.75"/><circle cx="794.5" cy="294.2" r="1.75"/><circle cx="798.5" cy="295.1" r="1.75"/><circle cx="802.5" cy="297.0" r="1.75"/><circle cx="806.5" cy="298.4" r="1.75"/><circle cx="810.5" cy="300.3" r="1.75"/><circle cx="814.5" cy="302.2" r="1.75"/><circle cx="818.5" cy="304.0" r="1.75"/><circle cx="822.5" cy="305.4" r="1.75"/><circle cx="826.5" cy="307.1" r="1.75"/><circle cx="830.5" cy="308.9" r="1.75"/><circle cx="835.5" cy="310.6" r="1.75"/><circle cx="839.5" cy="311.3" r="1.75"/></g>
<g fill="#ff9a9a"><circle cx="18.5" cy="305.5" r="0.5"/><circle cx="22.5" cy="306.3" r="0.5"/><circle cx="27.5" cy="308.4" r="0.5"/><circle cx="31.5" cy="310.2" r="0.5"/><circle cx="35.5" cy="311.3" r="0.5"/><circle cx="39.5" cy="312.3" r="0.5"/><circle cx="43.5" cy="313.2" r="0.5"/><circle cx="47.5" cy="314.1" r="0.5"/><circle cx="51.5" cy="314.6" r="0.5"/><circle cx="55.5" cy="313.4" r="0.5"/><circle cx="59.5" cy="313.3" r="0.5"/><circle cx="63.5" cy="311.4" r="0.5"/><circle cx="68.5" cy="310.7" r="0.5"/><circle cx="72.5" cy="309.5" r="0.5"/><circle cx="76.5" cy="307.9" r="0.5"/><circle cx="80.5" cy="306.5" r="0.5"/><circle cx="84.5" cy="305.6" r="0.5"/><circle cx="88.5" cy="304.8" r="0.5"/><circle cx="92.5" cy="303.9" r="0.5"/><circle cx="96.5" cy="302.6" r="0.5"/><circle cx="100.5" cy="300.9" r="0.5"/><circle cx="105.5" cy="299.3" r="0.5"/><circle cx="109.5" cy="298.7" r="0.5"/><circle cx="113.5" cy="297.7" r="0.5"/><circle cx="117.5" cy="297.1" r="0.5"/><circle cx="121.5" cy="296.6" r="0.5"/><circle cx="125.5" cy="295.9" r="0.5"/><circle cx="129.5" cy="295.2" r="0.5"/><circle cx="133.5" cy="294.6" r="0.5"/><circle cx="137.5" cy="294.1" r="0.5"/><circle cx="141.5" cy="294.1" r="0.5"/><circle cx="146.5" cy="294.7" r="0.5"/><circle cx="150.5" cy="295.7" r="0.5"/><circle cx="154.5" cy="296.3" r="0.5"/><circle cx="158.5" cy="296.8" r="0.5"/><circle cx="162.5" cy="297.1" r="0.5"/><circle cx="166.5" cy="297.3" r="0.5"/><circle cx="170.5" cy="297.4" r="0.5"/><circle cx="174.5" cy="297.5" r="0.5"/><circle cx="178.5" cy="297.6" r="0.5"/><circle cx="182.5" cy="297.6" r="0.5"/><circle cx="187.5" cy="297.6" r="0.5"/><circle cx="191.5" cy="297.6" r="0.5"/><circle cx="195.5" cy="297.6" r="0.5"/><circle cx="199.5" cy="297.6" r="0.5"/><circle cx="203.5" cy="297.5" r="0.5"/><circle cx="207.5" cy="297.4" r="0.5"/><circle cx="211.5" cy="297.0" r="0.5"/><circle cx="215.5" cy="296.5" r="0.5"/><circle cx="219.5" cy="295.9" r="0.5"/><circle cx="223.5" cy="295.7" r="0.5"/><circle cx="228.5" cy="295.3" r="0.5"/><circle cx="232.5" cy="295.6" r="0.5"/><circle cx="236.5" cy="295.9" r="0.5"/><circle cx="240.5" cy="296.6" r="0.5"/><circle cx="244.5" cy="296.6" r="0.5"/><circle cx="248.5" cy="296.8" r="0.5"/><circle cx="252.5" cy="297.0" r="0.5"/><circle cx="256.5" cy="296.8" r="0.5"/><circle cx="260.5" cy="296.6" r="0.5"/><circle cx="264.5" cy="295.9" r="0.5"/><circle cx="269.5" cy="294.8" r="0.5"/><circle cx="273.5" cy="293.8" r="0.5"/><circle cx="277.5" cy="292.8" r="0.5"/><circle cx="281.5" cy="291.8" r="0.5"/><circle cx="285.5" cy="290.8" r="0.5"/><circle cx="289.5" cy="290.1" r="0.5"/><circle cx="293.5" cy="289.3" r="0.5"/><circle cx="297.5" cy="289.0" r="0.5"/><circle cx="301.5" cy="288.7" r="0.5"/><circle cx="305.5" cy="288.5" r="0.5"/><circle cx="310.5" cy="288.1" r="0.5"/><circle cx="314.5" cy="287.9" r="0.5"/><circle cx="318.5" cy="287.6" r="0.5"/><circle cx="322.5" cy="287.3" r="0.5"/><circle cx="326.5" cy="286.9" r="0.5"/><circle cx="330.5" cy="286.4" r="0.5"/><circle cx="334.5" cy="285.6" r="0.5"/><circle cx="338.5" cy="284.9" r="0.5"/><circle cx="342.5" cy="284.1" r="0.5"/><circle cx="346.5" cy="283.4" r="0.5"/><circle cx="351.5" cy="282.5" r="0.5"/><circle cx="355.5" cy="281.8" r="0.5"/><circle cx="359.5" cy="281.0" r="0.5"/><circle cx="363.5" cy="280.1" r="0.5"/><circle cx="367.5" cy="279.3" r="0.5"/><circle cx="371.5" cy="279.5" r="0.5"/><circle cx="375.5" cy="279.6" r="0.5"/><circle cx="379.5" cy="279.9" r="0.5"/><circle cx="383.5" cy="280.2" r="0.5"/><circle cx="388.5" cy="280.8" r="0.5"/><circle cx="392.5" cy="281.4" r="0.5"/><circle cx="396.5" cy="282.1" r="0.5"/><circle cx="400.5" cy="282.8" r="0.5"/><circle cx="404.5" cy="283.4" r="0.5"/><circle cx="408.5" cy="283.9" r="0.5"/><circle cx="412.5" cy="284.4" r="0.5"/><circle cx="416.5" cy="284.9" r="0.5"/><circle cx="420.5" cy="285.4" r="0.5"/><circle cx="424.5" cy="285.8" r="0.5"/><circle cx="429.5" cy="286.3" r="0.5"/><circle cx="433.5" cy="286.5" r="0.5"/><circle cx="437.5" cy="286.8" r="0.5"/><circle cx="441.5" cy="287.0" r="0.5"/><circle cx="445.5" cy="287.1" r="0.5"/><circle cx="449.5" cy="287.1" r="0.5"/><circle cx="453.5" cy="287.2" r="0.5"/><circle cx="457.5" cy="287.5" r="0.5"/><circle cx="461.5" cy="287.9" r="0.5"/><circle cx="465.5" cy="288.2" r="0.5"/><circle cx="470.5" cy="289.7" r="0.5"/><circle cx="474.5" cy="289.4" r="0.5"/><circle cx="478.5" cy="289.2" r="0.5"/><circle cx="482.5" cy="289.1" r="0.5"/><circle cx="486.5" cy="289.1" r="0.5"/><circle cx="490.5" cy="289.1" r="0.5"/><circle cx="494.5" cy="289.2" r="0.5"/><circle cx="498.5" cy="289.4" r="0.5"/><circle cx="502.5" cy="289.6" r="0.5"/><circle cx="506.5" cy="289.8" r="0.5"/><circle cx="511.5" cy="290.4" r="0.5"/><circle cx="515.5" cy="290.8" r="0.5"/><circle cx="519.5" cy="291.2" r="0.5"/><circle cx="523.5" cy="291.7" r="0.5"/><circle cx="527.5" cy="292.1" r="0.5"/><circle cx="531.5" cy="292.3" r="0.5"/><circle cx="535.5" cy="292.3" r="0.5"/><circle cx="539.5" cy="292.4" r="0.5"/><circle cx="543.5" cy="293.2" r="0.5"/><circle cx="547.5" cy="294.0" r="0.5"/><circle cx="552.5" cy="295.7" r="0.5"/><circle cx="556.5" cy="296.4" r="0.5"/><circle cx="560.5" cy="296.9" r="0.5"/><circle cx="564.5" cy="297.4" r="0.5"/><circle cx="568.5" cy="297.5" r="0.5"/><circle cx="572.5" cy="297.6" r="0.5"/><circle cx="576.5" cy="297.4" r="0.5"/><circle cx="580.5" cy="297.1" r="0.5"/><circle cx="584.5" cy="296.7" r="0.5"/><circle cx="588.5" cy="296.0" r="0.5"/><circle cx="593.5" cy="295.0" r="0.5"/><circle cx="597.5" cy="294.2" r="0.5"/><circle cx="601.5" cy="293.6" r="0.5"/><circle cx="605.5" cy="293.1" r="0.5"/><circle cx="609.5" cy="292.7" r="0.5"/><circle cx="613.5" cy="292.2" r="0.5"/><circle cx="617.5" cy="292.0" r="0.5"/><circle cx="621.5" cy="291.9" r="0.5"/><circle cx="625.5" cy="291.9" r="0.5"/><circle cx="629.5" cy="292.2" r="0.5"/><circle cx="634.5" cy="292.6" r="0.5"/><circle cx="638.5" cy="292.8" r="0.5"/><circle cx="642.5" cy="293.0" r="0.5"/><circle cx="646.5" cy="293.2" r="0.5"/><circle cx="650.5" cy="293.2" r="0.5"/><circle cx="654.5" cy="293.2" r="0.5"/><circle cx="658.5" cy="292.8" r="0.5"/><circle cx="662.5" cy="292.2" r="0.5"/><circle cx="666.5" cy="292.0" r="0.5"/><circle cx="671.5" cy="291.6" r="0.5"/><circle cx="675.5" cy="291.4" r="0.5"/><circle cx="679.5" cy="291.1" r="0.5"/><circle cx="683.5" cy="290.7" r="0.5"/><circle cx="687.5" cy="290.3" r="0.5"/><circle cx="691.5" cy="290.2" r="0.5"/><circle cx="695.5" cy="289.8" r="0.5"/><circle cx="699.5" cy="289.4" r="0.5"/><circle cx="703.5" cy="289.1" r="0.5"/><circle cx="707.5" cy="289.1" r="0.5"/><circle cx="712.5" cy="289.1" r="0.5"/><circle cx="716.5" cy="288.9" r="0.5"/><circle cx="720.5" cy="288.5" r="0.5"/><circle cx="724.5" cy="288.1" r="0.5"/><circle cx="728.5" cy="288.9" r="0.5"/><circle cx="732.5" cy="289.9" r="0.5"/><circle cx="736.5" cy="290.9" r="0.5"/><circle cx="740.5" cy="291.8" r="0.5"/><circle cx="744.5" cy="292.0" r="0.5"/><circle cx="748.5" cy="292.2" r="0.5"/><circle cx="753.5" cy="292.3" r="0.5"/><circle cx="757.5" cy="291.8" r="0.5"/><circle cx="761.5" cy="291.4" r="0.5"/><circle cx="765.5" cy="291.4" r="0.5"/><circle cx="769.5" cy="291.4" r="0.5"/><circle cx="773.5" cy="291.5" r="0.5"/><circle cx="777.5" cy="291.5" r="0.5"/><circle cx="781.5" cy="291.8" r="0.5"/><circle cx="785.5" cy="292.3" r="0.5"/><circle cx="789.5" cy="292.5" r="0.5"/><circle cx="794.5" cy="294.2" r="0.5"/><circle cx="798.5" cy="295.1" r="0.5"/><circle cx="802.5" cy="297.0" r="0.5"/><circle cx="806.5" cy="298.4" r="0.5"/><circle cx="810.5" cy="300.3" r="0.5"/><circle cx="814.5" cy="302.2" r="0.5"/><circle cx="818.5" cy="304.0" r="0.5"/><circle cx="822.5" cy="305.4" r="0.5"/><circle cx="826.5" cy="307.1" r="0.5"/><circle cx="830.5" cy="308.9" r="0.5"/><circle cx="835.5" cy="310.6" r="0.5"/><circle cx="839.5" cy="311.3" r="0.5"/></g>
<line x1="17" y1="366.5" x2="904" y2="366.5" stroke="#7d8a96" stroke-width="1" stroke-dasharray="3 3"/>
<path d="M50.6 378.2 L54.8 372.0 L60.0 369.5 L64.2 367.4 L70.4 372.0 L76.7 376.2 L80.8 369.5 L84.0 367.4 L88.8 372.4 L93.3 368.2 L96.5 368.9 L100.6 364.1 L105.8 366.2 L112.1 367.8 L118.3 369.9 L121.5 368.9 L125.6 373.7 L129.8 365.1 L134.0 366.2 L139.2 372.0 L143.3 380.3 L146.5 384.5 L150.6 382.4 L154.8 374.5 L159.0 380.3 L167.3 373.5 L174.6 377.2 L178.8 374.5 L185.0 377.2 L191.2 378.2 L195.4 376.2 L200.6 372.4 L205.8 374.1 L211.0 374.5 L218.3 370.3 L223.5 359.5 L228.8 363.7 L232.9 380.3 L237.1 386.2 L240.0 383.5 L244.4 381.4 L246.2 380.3 L252.5 382.0 L256.7 369.9 L260.8 365.8 L265.0 358.5 L269.2 357.0 L274.4 354.3 L280.6 349.5 L284.8 355.8 L291.0 355.3 L296.2 360.5 L301.5 372.0 L305.6 363.7 L311.9 358.5 L318.1 355.3 L322.7 364.1 L329.6 355.3 L334.8 344.5 L338.3 352.2 L343.1 349.1 L348.3 349.5 L352.5 350.1 L359.8 346.0 L365.0 343.2 L367.5 340.8 L370.2 357.4 L375.4 363.7 L382.7 367.4 L387.9 365.1 L393.1 365.3 L400.4 368.9 L405.6 359.5 L411.9 365.3 L419.2 364.7 L424.4 367.4 L430.6 364.7 L436.9 366.2 L441.7 357.0 L446.2 359.1 L456.7 368.9 L465.6 377.2 L470.0 373.0 L474.2 357.4 L480.4 363.7 L485.6 365.8 L490.4 357.0 L495.0 366.2 L500.2 363.2 L503.3 366.8 L507.5 375.1 L511.7 376.2 L516.2 374.5 L521.0 375.8 L524.6 375.1 L528.3 378.2 L531.5 372.4 L535.6 376.6 L540.8 384.5 L545.0 389.7 L548.1 392.8 L552.3 390.8 L555.4 384.5 L560.6 380.3 L565.8 383.5 L569.0 381.4 L573.1 369.9 L576.2 365.3 L580.4 366.2 L584.6 360.5 L588.8 363.2 L594.0 362.6 L600.8 357.8 L605.4 367.4 L613.8 362.0 L616.9 364.7 L621.0 380.3 L625.2 382.4 L629.4 376.2 L634.6 376.2 L638.3 375.1 L641.9 378.2 L647.1 366.8 L651.2 362.6 L656.5 361.2 L661.7 357.8 L666.9 363.7 L671.0 365.8 L675.2 361.6 L679.4 372.0 L682.9 375.1 L687.3 357.0 L690.0 361.6 L696.2 365.8 L703.5 361.2 L712.3 365.8 L717.1 360.5 L721.2 361.6 L724.4 366.8 L728.5 382.0 L733.8 379.3 L740.0 376.2 L745.2 368.9 L750.4 365.8 L754.6 362.0 L758.8 364.7 L768.1 364.7 L773.3 362.0 L777.5 378.2 L780.6 376.2 L785.8 386.6 L790.0 389.7 L795.2 389.7 L798.3 397.0 L802.5 401.6 L806.7 383.5 L810.4 388.7 L814.0 391.8 L819.2 392.8 L826.5 396.4 L832.7 392.8 L835.8 394.5 L839.6 384.9 L839.6 402 L50.6 402 Z" fill="url(#rsig)" stroke="none"/>
<line x1="17" y1="343" x2="839" y2="343" stroke="#1a1ab0" stroke-width="2"/>
<line x1="17" y1="391" x2="839" y2="391" stroke="#1a1ab0" stroke-width="2"/>
<path d="M50.6 378.2 L54.8 372.0 L60.0 369.5 L64.2 367.4 L70.4 372.0 L76.7 376.2 L80.8 369.5 L84.0 367.4 L88.8 372.4 L93.3 368.2 L96.5 368.9 L100.6 364.1 L105.8 366.2 L112.1 367.8 L118.3 369.9 L121.5 368.9 L125.6 373.7 L129.8 365.1 L134.0 366.2 L139.2 372.0 L143.3 380.3 L146.5 384.5 L150.6 382.4 L154.8 374.5 L159.0 380.3 L167.3 373.5 L174.6 377.2 L178.8 374.5 L185.0 377.2 L191.2 378.2 L195.4 376.2 L200.6 372.4 L205.8 374.1 L211.0 374.5 L218.3 370.3 L223.5 359.5 L228.8 363.7 L232.9 380.3 L237.1 386.2 L240.0 383.5 L244.4 381.4 L246.2 380.3 L252.5 382.0 L256.7 369.9 L260.8 365.8 L265.0 358.5 L269.2 357.0 L274.4 354.3 L280.6 349.5 L284.8 355.8 L291.0 355.3 L296.2 360.5 L301.5 372.0 L305.6 363.7 L311.9 358.5 L318.1 355.3 L322.7 364.1 L329.6 355.3 L334.8 344.5 L338.3 352.2 L343.1 349.1 L348.3 349.5 L352.5 350.1 L359.8 346.0 L365.0 343.2 L367.5 340.8 L370.2 357.4 L375.4 363.7 L382.7 367.4 L387.9 365.1 L393.1 365.3 L400.4 368.9 L405.6 359.5 L411.9 365.3 L419.2 364.7 L424.4 367.4 L430.6 364.7 L436.9 366.2 L441.7 357.0 L446.2 359.1 L456.7 368.9 L465.6 377.2 L470.0 373.0 L474.2 357.4 L480.4 363.7 L485.6 365.8 L490.4 357.0 L495.0 366.2 L500.2 363.2 L503.3 366.8 L507.5 375.1 L511.7 376.2 L516.2 374.5 L521.0 375.8 L524.6 375.1 L528.3 378.2 L531.5 372.4 L535.6 376.6 L540.8 384.5 L545.0 389.7 L548.1 392.8 L552.3 390.8 L555.4 384.5 L560.6 380.3 L565.8 383.5 L569.0 381.4 L573.1 369.9 L576.2 365.3 L580.4 366.2 L584.6 360.5 L588.8 363.2 L594.0 362.6 L600.8 357.8 L605.4 367.4 L613.8 362.0 L616.9 364.7 L621.0 380.3 L625.2 382.4 L629.4 376.2 L634.6 376.2 L638.3 375.1 L641.9 378.2 L647.1 366.8 L651.2 362.6 L656.5 361.2 L661.7 357.8 L666.9 363.7 L671.0 365.8 L675.2 361.6 L679.4 372.0 L682.9 375.1 L687.3 357.0 L690.0 361.6 L696.2 365.8 L703.5 361.2 L712.3 365.8 L717.1 360.5 L721.2 361.6 L724.4 366.8 L728.5 382.0 L733.8 379.3 L740.0 376.2 L745.2 368.9 L750.4 365.8 L754.6 362.0 L758.8 364.7 L768.1 364.7 L773.3 362.0 L777.5 378.2 L780.6 376.2 L785.8 386.6 L790.0 389.7 L795.2 389.7 L798.3 397.0 L802.5 401.6 L806.7 383.5 L810.4 388.7 L814.0 391.8 L819.2 392.8 L826.5 396.4 L832.7 392.8 L835.8 394.5 L839.6 384.9" stroke="#f08a28" stroke-width="1.1" fill="none" stroke-linejoin="round"/>
<path d="M546.6 391.3 L548.1 392.8 M548.1 392.8 L551.2 391.3 M795.9 391.3 L798.3 397.0 M798.3 397.0 L802.5 401.6 M802.5 401.6 L804.9 391.3 M813.4 391.3 L814.0 391.8 M814.0 391.8 L819.2 392.8 M819.2 392.8 L826.5 396.4 M826.5 396.4 L832.7 392.8 M832.7 392.8 L835.8 394.5 M835.8 394.5 L837.1 391.3" stroke="#30d040" stroke-width="1.2" fill="none"/>
<path d="M364.5 344 L367.5 340.7" stroke="#ff4090" stroke-width="1.2" fill="none"/>
<rect x="16.5" y="38.5" width="884.0" height="231.0" fill="none" stroke="#a9c0d8" stroke-width="1"/>
<rect x="16.5" y="275.5" width="884.0" height="45.0" fill="none" stroke="#a9c0d8" stroke-width="1"/>
<rect x="16.5" y="326.5" width="884.0" height="76.0" fill="none" stroke="#a9c0d8" stroke-width="1"/>
<line x1="22.5" y1="402.5" x2="22.5" y2="406.0" stroke="#a9c0d8" stroke-width="1"/>
<line x1="47.5" y1="402.5" x2="47.5" y2="406.0" stroke="#a9c0d8" stroke-width="1"/>
<line x1="72.5" y1="402.5" x2="72.5" y2="406.0" stroke="#a9c0d8" stroke-width="1"/>
<line x1="96.5" y1="402.5" x2="96.5" y2="406.0" stroke="#a9c0d8" stroke-width="1"/>
<line x1="121.5" y1="402.5" x2="121.5" y2="406.0" stroke="#a9c0d8" stroke-width="1"/>
<line x1="145.5" y1="402.5" x2="145.5" y2="406.0" stroke="#a9c0d8" stroke-width="1"/>
<line x1="170.5" y1="402.5" x2="170.5" y2="406.0" stroke="#a9c0d8" stroke-width="1"/>
<line x1="195.5" y1="402.5" x2="195.5" y2="406.0" stroke="#a9c0d8" stroke-width="1"/>
<line x1="219.5" y1="402.5" x2="219.5" y2="406.0" stroke="#a9c0d8" stroke-width="1"/>
<line x1="244.5" y1="402.5" x2="244.5" y2="406.0" stroke="#a9c0d8" stroke-width="1"/>
<line x1="269.5" y1="402.5" x2="269.5" y2="406.0" stroke="#a9c0d8" stroke-width="1"/>
<line x1="293.5" y1="402.5" x2="293.5" y2="406.0" stroke="#a9c0d8" stroke-width="1"/>
<line x1="318.5" y1="402.5" x2="318.5" y2="406.0" stroke="#a9c0d8" stroke-width="1"/>
<line x1="342.5" y1="402.5" x2="342.5" y2="406.0" stroke="#a9c0d8" stroke-width="1"/>
<line x1="367.5" y1="402.5" x2="367.5" y2="406.0" stroke="#a9c0d8" stroke-width="1"/>
<line x1="392.5" y1="402.5" x2="392.5" y2="406.0" stroke="#a9c0d8" stroke-width="1"/>
<line x1="416.5" y1="402.5" x2="416.5" y2="406.0" stroke="#a9c0d8" stroke-width="1"/>
<line x1="441.5" y1="402.5" x2="441.5" y2="406.0" stroke="#a9c0d8" stroke-width="1"/>
<line x1="465.5" y1="402.5" x2="465.5" y2="406.0" stroke="#a9c0d8" stroke-width="1"/>
<line x1="490.5" y1="402.5" x2="490.5" y2="406.0" stroke="#a9c0d8" stroke-width="1"/>
<line x1="515.5" y1="402.5" x2="515.5" y2="406.0" stroke="#a9c0d8" stroke-width="1"/>
<line x1="539.5" y1="402.5" x2="539.5" y2="406.0" stroke="#a9c0d8" stroke-width="1"/>
<line x1="564.5" y1="402.5" x2="564.5" y2="406.0" stroke="#a9c0d8" stroke-width="1"/>
<line x1="588.5" y1="402.5" x2="588.5" y2="406.0" stroke="#a9c0d8" stroke-width="1"/>
<line x1="613.5" y1="402.5" x2="613.5" y2="406.0" stroke="#a9c0d8" stroke-width="1"/>
<line x1="638.5" y1="402.5" x2="638.5" y2="406.0" stroke="#a9c0d8" stroke-width="1"/>
<line x1="662.5" y1="402.5" x2="662.5" y2="406.0" stroke="#a9c0d8" stroke-width="1"/>
<line x1="687.5" y1="402.5" x2="687.5" y2="406.0" stroke="#a9c0d8" stroke-width="1"/>
<line x1="712.5" y1="402.5" x2="712.5" y2="406.0" stroke="#a9c0d8" stroke-width="1"/>
<line x1="736.5" y1="402.5" x2="736.5" y2="406.0" stroke="#a9c0d8" stroke-width="1"/>
<line x1="761.5" y1="402.5" x2="761.5" y2="406.0" stroke="#a9c0d8" stroke-width="1"/>
<line x1="785.5" y1="402.5" x2="785.5" y2="406.0" stroke="#a9c0d8" stroke-width="1"/>
<line x1="810.5" y1="402.5" x2="810.5" y2="406.0" stroke="#a9c0d8" stroke-width="1"/>
<line x1="835.5" y1="402.5" x2="835.5" y2="406.0" stroke="#a9c0d8" stroke-width="1"/>
<line x1="859.5" y1="402.5" x2="859.5" y2="406.0" stroke="#a9c0d8" stroke-width="1"/>
<line x1="884.5" y1="402.5" x2="884.5" y2="406.0" stroke="#a9c0d8" stroke-width="1"/>
<path d="M17 379V406M368 379V406" stroke="#d4ece6" stroke-width="2"/>
</svg>
<svg style="position:absolute;left:6px;top:6px" width="20" height="20" viewBox="6 6 20 20"><g fill="none" stroke="#56728f" stroke-width="1.2"><path d="M9.5 8.5V22.5H23"/><path d="M8.4 9.9L9.5 8.4L10.6 9.9M21.9 21.4L23.4 22.5L21.9 23.6"/></g>
<g stroke-width="1"><path d="M13.5 13V21" stroke="#2c5a38"/><rect x="12.4" y="15.2" width="2.2" height="3.8" fill="#7cbc88" stroke="#2e6e3e" stroke-width="1"/>
<path d="M17.5 8V18.5" stroke="#2c5a38"/><rect x="16.4" y="10.3" width="2.2" height="5.2" fill="#7cbc88" stroke="#2e6e3e" stroke-width="1"/>
<path d="M21.5 11V20" stroke="#5a3c4a"/><rect x="20.4" y="13.2" width="2.2" height="4.6" fill="#a87888" stroke="#6a4456" stroke-width="1"/></g></svg>
<div id="title">График USD /JPY  4 ЧАСА</div>
<div class="btn" style="left:857px"><svg width="30" height="17" viewBox="0 0 30 17"><rect x="10.5" y="8.7" width="10" height="3.8" rx="1.2" fill="#fdfdfd" stroke="#454b52" stroke-width="1.1"/></svg></div>
<div class="btn" style="left:890px"><svg width="30" height="17" viewBox="0 0 30 17"><rect x="10.6" y="4.6" width="10" height="7.8" rx="1.2" fill="#fdfdfd" stroke="#454b52" stroke-width="1.1"/><rect x="13.8" y="7.5" width="4" height="2.2" fill="#dfe6ee" stroke="#454b52" stroke-width="1"/></svg></div>
<div class="btn" style="left:923px"><svg width="30" height="17" viewBox="0 0 30 17"><path d="M12.3 6.3L18.9 10.7M18.9 6.3L12.3 10.7" fill="none" stroke="#454b52" stroke-width="4.3" stroke-linecap="round"/><path d="M12.3 6.3L18.9 10.7M18.9 6.3L12.3 10.7" fill="none" stroke="#fdfdfd" stroke-width="2.2" stroke-linecap="round"/></svg></div>
<span class="ema" style="left:18px;color:#1616ee">Exponential_Moving_Average</span><span class="ema" style="left:155.6px;color:#ee1a1a">Exponential_Moving_Average</span>
<div id="leg"><i style="left:4px;background:#e8323c;border:1px solid #b8202a"></i><i style="left:17px;background:#1e96d8;border:1px solid #1878b0"></i></div>
<span class="ind" style="left:18px;top:277.5px;color:#14147c;letter-spacing:-0.75px">MACD</span>
<span class="ind" style="left:18px;top:328.6px;color:#f08a30;letter-spacing:-0.75px">RSI</span>
<div class="mon" style="left:17px;width:70px;letter-spacing:0.32px;padding-left:5.6px">Июнь 2020</div>
<div class="mon" style="left:368px;width:69px;letter-spacing:0.3px;padding-left:6px">Июль 2020</div>
<span class="xl" style="left:6.8px">11</span><span class="xl" style="left:31.8px">12</span><span class="xl" style="left:56.8px">15</span><span class="xl" style="left:80.8px">16</span><span class="xl" style="left:105.8px">17</span><span class="xl" style="left:129.8px">18</span><span class="xl" style="left:154.8px">19</span><span class="xl" style="left:179.8px">22</span><span class="xl" style="left:203.8px">23</span><span class="xl" style="left:228.8px">24</span><span class="xl" style="left:253.8px">25</span><span class="xl" style="left:277.8px">26</span><span class="xl" style="left:302.8px">29</span><span class="xl" style="left:326.8px">30</span><span class="xl" style="left:351.8px">1</span><span class="xl" style="left:376.8px">2</span><span class="xl" style="left:400.8px">3</span><span class="xl" style="left:425.8px">6</span><span class="xl" style="left:449.8px">7</span><span class="xl" style="left:474.8px">8</span><span class="xl" style="left:499.8px">9</span><span class="xl" style="left:523.8px">10</span><span class="xl" style="left:548.8px">13</span><span class="xl" style="left:572.8px">14</span><span class="xl" style="left:597.8px">15</span><span class="xl" style="left:622.8px">16</span><span class="xl" style="left:646.8px">17</span><span class="xl" style="left:671.8px">20</span><span class="xl" style="left:696.8px">21</span><span class="xl" style="left:720.8px">22</span><span class="xl" style="left:745.8px">23</span><span class="xl" style="left:769.8px">24</span><span class="xl" style="left:794.8px">27</span><span class="xl" style="left:819.8px">28</span><span class="xl" style="left:843.8px">29</span><span class="xl" style="left:868.8px">30</span>
<span class="pl" style="top:76.3px">109.00</span><span class="pl" style="top:122.3px">108.00</span><span class="pl" style="top:167.4px">107.00</span><span class="pl" style="top:213.3px">106.00</span><span class="pl" style="top:259.3px">105.00</span><span class="pl" style="top:287.6px;left:909px">+0.0</span><span class="pl" style="top:363.4px">50</span>
<div id="cur">105.54</div>
</div>
</body></html>
